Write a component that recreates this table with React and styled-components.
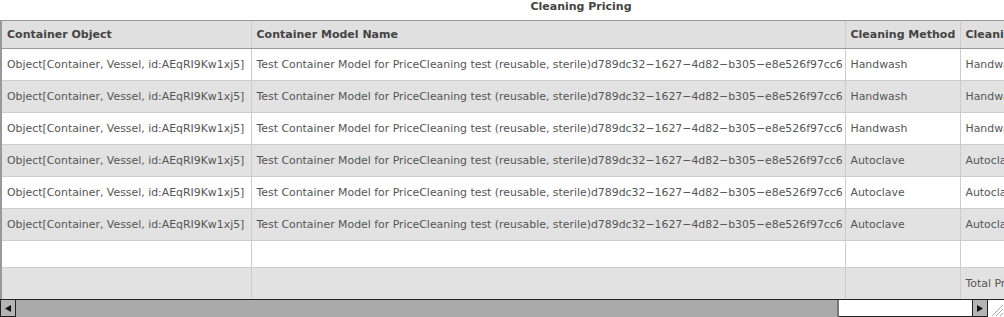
import React from 'react';
import styled, { createGlobalStyle } from 'styled-components';

const GlobalStyle = createGlobalStyle`
  html, body {
    margin: 0;
    padding: 0;
    background: #ffffff;
    overflow: hidden;
  }
  body {
    font-family: "DejaVu Sans", "Liberation Sans", sans-serif;
  }
`;

const Panel = styled.div`
  width: 1004px;
  height: 317px;
  display: flex;
  flex-direction: column;
  overflow: hidden;
`;

const TitleBar = styled.div`
  width: 1162px;
  height: 20px;
  flex: none;
  text-align: center;
  font-size: 11px;
  font-weight: bold;
  color: #444444;
  line-height: 13px;
`;

const Viewport = styled.div`
  flex: 1;
  overflow: hidden;
  border-top: 1px solid #999999;
  border-left: 2px solid #999999;
`;

const Grid = styled.table`
  border-collapse: collapse;
  table-layout: fixed;
  width: 1240px;
  font-size: 10.9px;
  color: #555555;
`;

const HeadCell = styled.th`
  height: 27px;
  padding: 0 5px;
  text-align: left;
  font-size: 11px;
  font-weight: bold;
  color: #444444;
  background: #e0e0e0;
  border-right: 1px solid #cccccc;
  border-bottom: 1px solid #999999;
  white-space: nowrap;
  overflow: hidden;
`;

const Row = styled.tr`
  background: ${p => (p.$shaded ? '#e2e2e2' : '#ffffff')};
`;

const Cell = styled.td`
  height: ${p => p.$h || 31}px;
  padding: 0 2px 0 5px;
  border-right: 1px solid #cccccc;
  border-bottom: 1px solid #cccccc;
  white-space: nowrap;
  overflow: hidden;
`;

const ScrollBar = styled.div`
  height: 18px;
  flex: none;
  display: flex;
  border-top: 1px solid #222222;
  box-sizing: border-box;
  background: #ffffff;
`;

const ArrowButton = styled.div`
  width: 16px;
  flex: none;
  display: flex;
  align-items: center;
  justify-content: center;
  background: #b4b4b4;
  border: 1px solid #222222;
  border-top: none;
  box-sizing: border-box;
`;

const Thumb = styled.div`
  width: 823px;
  flex: none;
  background: #aaaaaa;
  border-right: 2px solid #777777;
  box-sizing: border-box;
`;

const Track = styled.div`
  flex: 1;
  background: #ffffff;
  border-bottom: 1px solid #222222;
`;

const Grip = styled.div`
  width: 16px;
  flex: none;
  background: #ffffff;
`;

const objectName = 'Object[Container, Vessel, id:AEqRI9Kw1xj5]';
const modelName =
  'Test Container Model for PriceCleaning test (reusable, sterile)d789dc32\u22121627\u22124d82\u2212b305\u2212e8e526f97cc6';

const rows = [
  { method: 'Handwash', kind: 'Handwash' },
  { method: 'Handwash', kind: 'Handwash' },
  { method: 'Handwash', kind: 'Handwash' },
  { method: 'Autoclave', kind: 'Autoclave' },
  { method: 'Autoclave', kind: 'Autoclave' },
  { method: 'Autoclave', kind: 'Autoclave' },
];

function Arrow({ left }) {
  return (
    <svg width="6" height="7" viewBox="0 0 6 7">
      <path d={left ? 'M6 0 L0 3.5 L6 7 Z' : 'M0 0 L6 3.5 L0 7 Z'} fill="#111111" />
    </svg>
  );
}

function App() {
  return (
    <Panel>
      <GlobalStyle />
      <TitleBar>Cleaning Pricing</TitleBar>
      <Viewport>
        <Grid>
          <colgroup>
            <col style={{ width: 249 }} />
            <col style={{ width: 594 }} />
            <col style={{ width: 115 }} />
            <col style={{ width: 282 }} />
          </colgroup>
          <thead>
            <tr>
              <HeadCell>Container Object</HeadCell>
              <HeadCell>Container Model Name</HeadCell>
              <HeadCell>Cleaning Method</HeadCell>
              <HeadCell>Cleaning Type</HeadCell>
            </tr>
          </thead>
          <tbody>
            {rows.map((r, i) => (
              <Row key={i} $shaded={i % 2 === 1}>
                <Cell>{objectName}</Cell>
                <Cell>{modelName}</Cell>
                <Cell>{r.method}</Cell>
                <Cell>{r.kind}</Cell>
              </Row>
            ))}
            <Row>
              <Cell $h={26} />
              <Cell $h={26} />
              <Cell $h={26} />
              <Cell $h={26} />
            </Row>
            <Row $shaded>
              <Cell />
              <Cell />
              <Cell />
              <Cell>Total Price</Cell>
            </Row>
          </tbody>
        </Grid>
      </Viewport>
      <ScrollBar>
        <ArrowButton>
          <Arrow left />
        </ArrowButton>
        <Thumb />
        <Track />
        <ArrowButton>
          <Arrow />
        </ArrowButton>
        <Grip>
          <svg width="16" height="17" viewBox="0 0 16 17">
            <path d="M4 16 L15 5 M8 16 L15 9 M12 16 L15 13" stroke="#aaaaaa" strokeWidth="1" />
          </svg>
        </Grip>
      </ScrollBar>
    </Panel>
  );
}

export default App;
